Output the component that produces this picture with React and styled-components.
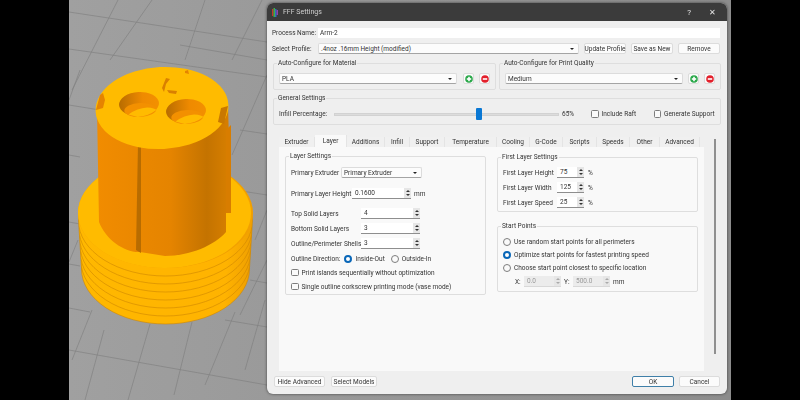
import styled, { createGlobalStyle } from "styled-components"

const Global = createGlobalStyle`
  html, body { margin: 0; padding: 0; background: #000; }
  body { font-family: Roboto, "Noto Sans", sans-serif; font-size: 6.5px; color: #333; }
  * { box-sizing: border-box; }
`
const Page = styled.div`
  width: 800px;
  height: 400px;
  background: #000;
  padding-left: 69px;
  padding-right: 69px;
  overflow: hidden;
`
const Viewport = styled.div`
  position: relative;
  width: 662px;
  height: 400px;
`
const SceneSvg = styled.svg`
  display: block;
`
const Dialog = styled.div`
  position: absolute;
  left: 198px;
  top: 3px;
  width: 460px;
  height: 391px;
  display: flex;
  flex-direction: column;
  background: #efefef;
  border-radius: 6px;
  overflow: hidden;
  box-shadow: 0 0 3px rgba(0,0,0,.6);
  filter: blur(0.25px);
`
const TitleBar = styled.div`
  height: 18px;
  background: #3b3b3b;
  color: #cfcfcf;
  display: flex;
  align-items: center;
  padding: 0 11px 0 5px;
  font-size: 7px;
  flex-shrink: 0;
`
const Title = styled.span`
  margin-left: 5px;
  flex: 1;
`
const TitleBtn = styled.span`
  font-size: 8px;
  margin-left: ${p => p.$gap || 0}px;
  color: #e4e4e4;
`
const Body = styled.div`
  flex: 1;
  display: flex;
  flex-direction: column;
  padding: 7px 7px 7px 5px;
`
const Row = styled.div`
  display: flex;
  align-items: center;
  height: ${p => p.$h || 11}px;
  margin-top: ${p => p.$mt || 0}px;
  gap: ${p => p.$gap || 0}px;
`
const Label = styled.span`
  width: ${p => p.$w ? p.$w + "px" : "auto"};
  margin-left: ${p => p.$ml || 0}px;
  flex-shrink: 0;
  white-space: nowrap;
`
const TextInput = styled.div`
  flex: 1;
  height: 10px;
  background: #fff;
  line-height: 10px;
  padding-left: 2px;
`
const Select = styled.div`
  position: relative;
  flex: ${p => p.$w ? "none" : 1};
  width: ${p => p.$w ? p.$w + "px" : "auto"};
  height: 11px;
  line-height: 10px;
  padding-left: 2px;
  background: #fcfcfc;
  border: 1px solid #dcdcdc;
  border-bottom-color: #a4a4a4;
  border-radius: 2px;
  &::after {
    content: "";
    position: absolute;
    right: 4px;
    top: 3.5px;
    border: 2px solid transparent;
    border-top: 2.5px solid #222;
    border-bottom: 0;
  }
`
const Btn = styled.div`
  width: ${p => p.$w}px;
  height: ${p => p.$h || 11}px;
  flex-shrink: 0;
  margin-left: ${p => p.$ml || 0}px;
  margin-right: ${p => p.$mr || 0}px;
  background: #fbfbfb;
  border: 1px solid ${p => p.$default ? "#3f7fa8" : "#dcdcdc"};
  border-radius: 2px;
  display: flex;
  align-items: center;
  justify-content: center;
  white-space: nowrap;
`
const Group = styled.fieldset`
  margin: 0;
  min-width: 0;
  padding: 0 5px;
  flex: ${p => p.$flex || "none"};
  height: ${p => p.$h}px;
  border: 1px solid #dedede;
  border-radius: 2px;
`
const Legend = styled.legend`
  padding: 0 1px;
  margin-left: -2px;
  font-size: 6.5px;
  line-height: 8px;
`
const GroupRow = styled.div`
  display: flex;
  gap: 3px;
  margin: ${p => p.$mt}px 0 0 1px;
`
const IconBtn = styled(Btn)`
  width: 11px;
  padding: 0;
`
const Track = styled.div`
  position: relative;
  width: 225px;
  height: 3px;
  background: #dcdcdc;
  border: 1px solid #d2d2d2;
  flex-shrink: 0;
`
const Thumb = styled.div`
  position: absolute;
  left: 141px;
  top: -6px;
  width: 6px;
  height: 12px;
  background: #0a78d4;
  border-radius: 1px;
`
const Check = styled.span`
  width: 7.5px;
  height: 7.5px;
  flex-shrink: 0;
  border: 1px solid #7d7d7d;
  border-radius: 1.5px;
  background: #fafafa;
  margin-left: ${p => p.$ml || 0}px;
  margin-right: 3px;
`
const Radio = styled.span`
  width: 8px;
  height: 8px;
  flex-shrink: 0;
  border-radius: 50%;
  background: ${p => p.$on ? "#fff" : "#fafafa"};
  border: ${p => p.$on ? "2.4px solid #0a67b8" : "1px solid #7d7d7d"};
  margin-left: ${p => p.$ml || 0}px;
  margin-right: 3px;
`
const TabArea = styled.div`
  display: flex;
  margin: 12px 0 0 7px;
  flex: 1;
  min-height: 0;
`
const TabCol = styled.div`
  width: 425px;
  display: flex;
  flex-direction: column;
`
const TabBar = styled.div`
  display: flex;
  height: 10px;
  flex-shrink: 0;
`
const Tab = styled.div`
  width: ${p => p.$w}px;
  height: ${p => p.$on ? 12 : 10}px;
  margin-top: ${p => p.$on ? -2 : 0}px;
  background: ${p => p.$on ? "#f9f9f9" : "#f0f0f0"};
  border-right: 1px solid #e4e4e4;
  display: flex;
  align-items: center;
  justify-content: center;
  white-space: nowrap;
`
const Panel = styled.div`
  flex: 1;
  background: #f9f9f9;
  padding: 5px 6px;
  display: flex;
  gap: 11px;
  align-items: flex-start;
`
const Column = styled.div`
  width: 201px;
  margin-top: ${p => p.$mt || 0}px;
  display: flex;
  flex-direction: column;
  gap: ${p => p.$gap || 0}px;
`
const Scrollbar = styled.div`
  width: 2px;
  height: 215px;
  margin: 2px 0 0 10px;
  background: #8f8f8f;
`
const Spin = styled.div`
  position: relative;
  width: ${p => p.$w}px;
  height: 11px;
  line-height: 10px;
  padding-left: 3px;
  margin-right: ${p => p.$mr || 0}px;
  flex-shrink: 0;
  background: ${p => p.$off ? "#ececec" : "#fff"};
  color: ${p => p.$off ? "#999" : "#333"};
  border-bottom: 1px solid ${p => p.$off ? "#d8d8d8" : "#8e8e8e"};
`
const SpinBtns = styled.span`
  position: absolute;
  right: 0;
  top: 0;
  width: 7px;
  height: 10px;
  background: #e6e6e6;
  display: flex;
  flex-direction: column;
  align-items: center;
  justify-content: space-around;
  padding: 1px 0;
  &::before, &::after {
    content: "";
    border-left: 2px solid transparent;
    border-right: 2px solid transparent;
  }
  &::before { border-bottom: 2px solid ${p => p.$off ? "#aaa" : "#333"}; }
  &::after { border-top: 2px solid ${p => p.$off ? "#aaa" : "#333"}; }
`
const Spacer = styled.div`
  flex: 1;
`

const tabs = [
  ["Extruder", 36], ["Layer", 32], ["Additions", 38], ["Infill", 25], ["Support", 35],
  ["Temperature", 52], ["Cooling", 33], ["G-Code", 33], ["Scripts", 34], ["Speeds", 33],
  ["Other", 30], ["Advanced", 40],
]

const RoundIcon = ({ color, plus }) => (
  <svg width="8" height="8" viewBox="0 0 8 8">
    <circle cx="4" cy="4" r="3.8" fill={color} />
    <rect x="1.8" y="3.2" width="4.4" height="1.6" fill="#fff" />
    {plus && <rect x="3.2" y="1.8" width="1.6" height="4.4" fill="#fff" />}
  </svg>
)

const Logo = () => (
  <svg width="6" height="9" viewBox="0 0 6 9">
    <rect x="0" y="1" width="1.5" height="7" fill="#c0392b" />
    <rect x="1.5" y="0" width="1.5" height="9" fill="#3fae49" />
    <rect x="3" y="1" width="1.5" height="8" fill="#2d6cc0" />
    <rect x="4.5" y="2" width="1.5" height="5" fill="#8e44ad" />
  </svg>
)

// one ellipse per thread, painted from the bottom up so only the lower rims show
const threads = [7, 6, 5, 4, 3, 2, 1]

const Hole = ({ cx, cy }) => (
  <g transform={`rotate(-3 ${cx} ${cy})`}>
    <ellipse cx={cx} cy={cy} rx="20" ry="12" fill="url(#hole)" />
    <ellipse cx={cx + 1} cy={cy + 6} rx="16" ry="7" fill="#f39000" />
    <path d={`M${cx - 11} ${cy + 10} Q${cx - 2} ${cy + 4} ${cx + 8} ${cy + 4} Q${cx + 16} ${cy + 5} ${cx + 17} ${cy + 7} Q${cx + 8} ${cy + 13} ${cx - 2} ${cy + 13} Z`} fill="#ffbb00" />
  </g>
)

const Scene = () => (
  <SceneSvg width="662" height="400" viewBox="69 0 662 400">
    <defs>
      <linearGradient id="floor" x1="0" x2="1" y1="0" y2="0">
        <stop offset="0" stopColor="#a0a0a0" />
        <stop offset="1" stopColor="#8c8c8c" />
      </linearGradient>
      <linearGradient id="cyl" x1="0" x2="1" y1="0" y2="0">
        <stop offset="0" stopColor="#f18c00" />
        <stop offset="0.55" stopColor="#e58400" />
        <stop offset="0.82" stopColor="#c47300" />
        <stop offset="1" stopColor="#d98000" />
      </linearGradient>
      <linearGradient id="hole" x1="0" x2="1" y1="0" y2="0">
        <stop offset="0" stopColor="#b86c00" />
        <stop offset="0.6" stopColor="#ef8a00" />
        <stop offset="1" stopColor="#f39000" />
      </linearGradient>
      <linearGradient id="flange" x1="0" x2="1" y1="0" y2="0">
        <stop offset="0" stopColor="#ffb800" />
        <stop offset="0.85" stopColor="#ffb300" />
        <stop offset="1" stopColor="#f0a000" />
      </linearGradient>
    </defs>
    <rect x="69" y="0" width="662" height="400" fill="url(#floor)" />
    <g stroke="#7c7c7c" strokeWidth="0.7" fill="none" opacity="0.85">
      <path d="M69 49 L267 77M69 105 L100 110M69 155 L80 157M69 222 L80 224M69 264 L80 266M69 308 L90 312M69 350 L267 385" />
      <path d="M69 12 L267 42M180 45 L267 60M240 130 L267 134M235 190 L267 195M250 280 L267 283M225 320 L267 327" />
      <path d="M80 70 L69 100M118 0 L72 90M152 0 L110 60M205 0 L185 60M262 0 L232 60M267 75 L232 155M267 210 L255 240M267 260 L240 315" />
      <path d="M78 240 L69 262M92 310 L72 360M150 324 L128 400M192 322 L174 395M235 312 L205 385M265 300 L245 370M104 330 L85 400" />
    </g>
    {/* lower threaded flange */}
    {threads.map(i => (
      <ellipse key={i} cx="165.5" cy={213 + i * 8} rx={87.5 - i * 0.5} ry="55" fill="url(#flange)" stroke="#cf8600" strokeWidth="0.6" />
    ))}
    <ellipse cx="165.5" cy="213" rx="87.5" ry="55" fill="#f2a000" />
    <ellipse cx="164.5" cy="213" rx="86.5" ry="55" fill="#ffbb00" />
    {/* main cylinder */}
    <path d="M97 110 L99 222 C106 240 125 253 140 252 L165 256 C190 256 215 245 226 232 L226 213 L231 213 L228 105 Z" fill="url(#cyl)" />
    <path d="M138 144 L136 250 L141 253 L141 145 Z" fill="#b86c00" />
    <path d="M226 130 L231 125 L231 213 L226 213 Z" fill="#d87d00" />
    {/* top face */}
    <g transform="rotate(-3 162 108)">
      <ellipse cx="162" cy="108" rx="66.5" ry="41" fill="#ffbb00" />
    </g>
    <path d="M103 93 L105 100 L103 108 L96 110 L100 95 Z" fill="#e58400" />
    <path d="M221 108 L228 106 L224 124 L218 122 Z" fill="#c97800" />
    <path d="M185 71 L188 70 L189 74 L185 73 Z" fill="#e58400" />
    <Hole cx={139} cy={104} />
    <Hole cx={186} cy={111} />
    <path d="M162 88 L166 78 L170 79 L166 84 L164 92 Z" fill="#d98000" />
    <path d="M167 90 L177 91 L176 94 L169 93 Z" fill="#d98000" />
  </SceneSvg>
)

const App = () => {
  return (
    <>
      <Global />
      <Page>
        <Viewport>
          <Scene />
          <Dialog>
            <TitleBar>
              <Logo />
              <Title>FFF Settings</Title>
              <TitleBtn>?</TitleBtn>
              <TitleBtn $gap={18}>✕</TitleBtn>
            </TitleBar>
            <Body>
              <Row $h={10}>
                <Label $w={46}>Process Name:</Label>
                <TextInput>Arm-2</TextInput>
              </Row>
              <Row $mt={5}>
                <Label $w={46}>Select Profile:</Label>
                <Select>.4noz .16mm Height (modified)</Select>
                <Btn $w={42} $ml={5}>Update Profile</Btn>
                <Btn $w={42} $ml={5}>Save as New</Btn>
                <Btn $w={42} $ml={5}>Remove</Btn>
              </Row>
              <GroupRow $mt={5}>
                <Group $flex="0 0 223px" $h={31}>
                  <Legend>Auto-Configure for Material</Legend>
                  <Row $mt={6}>
                    <Select>PLA</Select>
                    <IconBtn $ml={6}><RoundIcon color="#2aa84a" plus /></IconBtn>
                    <IconBtn $ml={5}><RoundIcon color="#e3202c" /></IconBtn>
                  </Row>
                </Group>
                <Group $flex="0 0 222px" $h={31}>
                  <Legend>Auto-Configure for Print Quality</Legend>
                  <Row $mt={6}>
                    <Select>Medium</Select>
                    <IconBtn $ml={5}><RoundIcon color="#2aa84a" plus /></IconBtn>
                    <IconBtn $ml={5}><RoundIcon color="#e3202c" /></IconBtn>
                  </Row>
                </Group>
              </GroupRow>
              <GroupRow $mt={4}>
                <Group $flex="0 0 448px" $h={31}>
                  <Legend>General Settings</Legend>
                  <Row $h={14} $mt={5}>
                    <Label $w={55}>Infill Percentage:</Label>
                    <Track><Thumb /></Track>
                    <Label $w={14} $ml={3}>65%</Label>
                    <Check $ml={15} />
                    <Label $w={34}>Include Raft</Label>
                    <Check $ml={18} />
                    <Label>Generate Support</Label>
                  </Row>
                </Group>
              </GroupRow>
              <TabArea>
                <TabCol>
                  <TabBar>
                    {tabs.map(([name, w]) => (
                      <Tab key={name} $w={w} $on={name === "Layer"}>{name}</Tab>
                    ))}
                  </TabBar>
                  <Panel>
                    <Column>
                      <Group $h={143}>
                        <Legend>Layer Settings</Legend>
                        <Row $mt={7}>
                          <Label $w={50}>Primary Extruder</Label>
                          <Select $w={81}>Primary Extruder</Select>
                        </Row>
                        <Row $mt={10}>
                          <Label $w={61}>Primary Layer Height</Label>
                          <Spin $w={59} $mr={3}>0.1600<SpinBtns /></Spin>
                          <Label>mm</Label>
                        </Row>
                        <Row $mt={9}>
                          <Label $w={70}>Top Solid Layers</Label>
                          <Spin $w={59}>4<SpinBtns /></Spin>
                        </Row>
                        <Row $mt={4}>
                          <Label $w={70}>Bottom Solid Layers</Label>
                          <Spin $w={59}>3<SpinBtns /></Spin>
                        </Row>
                        <Row $mt={4}>
                          <Label $w={70}>Outline/Perimeter Shells</Label>
                          <Spin $w={59}>3<SpinBtns /></Spin>
                        </Row>
                        <Row $mt={4}>
                          <Label>Outline Direction:</Label>
                          <Radio $on $ml={4} />
                          <Label>Inside-Out</Label>
                          <Radio $ml={6} />
                          <Label>Outside-In</Label>
                        </Row>
                        <Row $mt={3}>
                          <Check />
                          <Label>Print islands sequentially without optimization</Label>
                        </Row>
                        <Row $mt={3}>
                          <Check />
                          <Label>Single outline corkscrew printing mode (vase mode)</Label>
                        </Row>
                      </Group>
                    </Column>
                    <Column $gap={10} $mt={1}>
                      <Group $h={59}>
                        <Legend>First Layer Settings</Legend>
                        <Row $mt={6}>
                          <Label $w={54}>First Layer Height</Label>
                          <Spin $w={27} $mr={4}>75<SpinBtns /></Spin>
                          <Label>%</Label>
                        </Row>
                        <Row $mt={4}>
                          <Label $w={54}>First Layer Width</Label>
                          <Spin $w={27} $mr={4}>125<SpinBtns /></Spin>
                          <Label>%</Label>
                        </Row>
                        <Row $mt={4}>
                          <Label $w={54}>First Layer Speed</Label>
                          <Spin $w={27} $mr={4}>25<SpinBtns /></Spin>
                          <Label>%</Label>
                        </Row>
                      </Group>
                      <Group $h={70}>
                        <Legend>Start Points</Legend>
                        <Row $mt={6}>
                          <Radio />
                          <Label>Use random start points for all perimeters</Label>
                        </Row>
                        <Row $mt={2}>
                          <Radio $on />
                          <Label>Optimize start points for fastest printing speed</Label>
                        </Row>
                        <Row $mt={2}>
                          <Radio />
                          <Label>Choose start point closest to specific location</Label>
                        </Row>
                        <Row $mt={3}>
                          <Label $w={9} $ml={12}>X:</Label>
                          <Spin $w={37} $off $mr={3}>0.0<SpinBtns $off /></Spin>
                          <Label $w={9}>Y:</Label>
                          <Spin $w={37} $off $mr={3}>500.0<SpinBtns $off /></Spin>
                          <Label>mm</Label>
                        </Row>
                      </Group>
                    </Column>
                  </Panel>
                </TabCol>
                <Scrollbar />
              </TabArea>
              <Row $mt={5}>
                <Btn $w={51} $ml={2} $mr={6}>Hide Advanced</Btn>
                <Btn $w={46}>Select Models</Btn>
                <Spacer />
                <Btn $w={42} $mr={5} $default>OK</Btn>
                <Btn $w={41}>Cancel</Btn>
              </Row>
            </Body>
          </Dialog>
        </Viewport>
      </Page>
    </>
  )
}

export default App
